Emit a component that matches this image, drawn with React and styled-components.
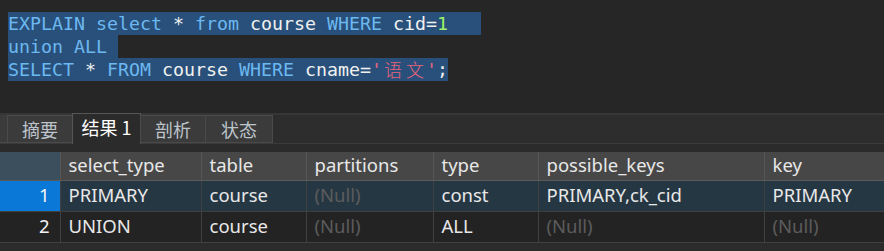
import React from "react";
import styled, { createGlobalStyle } from "styled-components";

const Global = createGlobalStyle`
  html, body { margin: 0; padding: 0; background: #262626; overflow: hidden; }
  body { width: 884px; height: 251px; }
`;

const Page = styled.div`
  width: 884px;
  height: 251px;
  display: flex;
  flex-direction: column;
  background: #262626;
  overflow: hidden;
`;

const Editor = styled.div`
  padding: 12px 0 0 8px;
  height: 113px;
  flex-shrink: 0;
  box-sizing: border-box;
  display: flex;
  flex-direction: column;
  align-items: flex-start;
  font-family: "DejaVu Sans Mono", "Liberation Mono", monospace;
  font-size: 18.27px;
  color: #f0f0f0;
`;

const Line = styled.div`
  height: 23px;
  line-height: 23px;
  white-space: pre;
  background: #29507a;
  padding-right: ${(p) => p.$tail || 0}px;
`;

const Kw = styled.span`color: #6cb8f0;`;
const Num = styled.span`color: #9ff06a;`;
const Str = styled.span`color: #e8637d;`;
const Wide = styled.span`
  display: inline-block;
  width: 22px;
  text-align: center;
  font-family: "Noto Sans CJK SC", sans-serif;
  font-size: 18px;
  font-weight: 300;
  line-height: 23px;
  vertical-align: top;
`;

const Panel = styled.div`
  flex: 1;
  background: #2b2b2b;
  display: flex;
  flex-direction: column;
`;

const TabBar = styled.div`
  height: 31px;
  flex-shrink: 0;
  display: flex;
  align-items: stretch;
  box-sizing: border-box;
  border-top: 2px solid #363636;
  border-bottom: 1px solid #3a3a3a;
  background: #2d2d2d;
  font-family: "Noto Sans CJK SC", "Noto Sans", sans-serif;
  font-size: 18px;
`;

const Tab = styled.div`
  box-sizing: border-box;
  display: flex;
  align-items: center;
  justify-content: center;
  padding: 0 ${(p) => (p.$active ? 8 : 14)}px;
  min-width: ${(p) => p.$w || 0}px;
  color: ${(p) => (p.$active ? "#ffffff" : "#bcc4cc")};
  background: ${(p) => (p.$active ? "#2b2b2b" : "#3b3b3b")};
  border: 1px solid ${(p) => (p.$active ? "#565656" : "#4a4a4a")};
  border-bottom: ${(p) => (p.$active ? "none" : "1px solid #4a4a4a")};
  margin: ${(p) => (p.$active ? "-2px 0 -1px" : "0")};
  margin-left: -1px;
  line-height: 1;
  padding-bottom: ${(p) => (p.$active ? 4 : 0)}px;
`;

const Stub = styled.div`
  width: 8px;
  box-sizing: border-box;
  background: #3b3b3b;
  border-right: 1px solid #4a4a4a;
  border-bottom: 1px solid #4a4a4a;
`;

const Grid = styled.table`
  margin-top: 8px;
  width: 1000px;
  table-layout: fixed;
  border-collapse: collapse;
  font-family: "Noto Sans", "Open Sans", sans-serif;
  font-size: 18.5px;
  color: #e8e8e8;
`;

const HeadCell = styled.th`
  height: 26px;
  padding: 0 0 2px 8px;
  text-align: left;
  font-weight: 400;
  background: ${(p) => (p.$corner ? "#3c4f5c" : "#474747")};
  border-right: 1px solid #575757;
  border-bottom: 1px solid #5a5a5a;
  white-space: nowrap;
  overflow: hidden;
  line-height: 1;
`;

const Row = styled.tr`
  background: ${(p) => (p.$selected ? "#263744" : "#232323")};
`;

const Cell = styled.td`
  height: 28px;
  padding: 0 0 2px 8px;
  border-right: 1px solid #404040;
  border-bottom: 1px solid #404040;
  white-space: nowrap;
  overflow: hidden;
  line-height: 1;
  color: ${(p) => (p.$null ? "#5c5c5c" : "#e8e8e8")};
`;

const NumCell = styled.td`
  height: 28px;
  padding: 0 10px 2px 0;
  text-align: right;
  border-right: 1px solid #404040;
  border-bottom: 1px solid #404040;
  background: ${(p) => (p.$selected ? "#0a78d6" : "#232323")};
  color: #f4f4f4;
  line-height: 1;
`;

const cols = [60, 141, 105, 127, 105, 226, 236];
const headers = ["select_type", "table", "partitions", "type", "possible_keys", "key"];
const rows = [
  ["PRIMARY", "course", null, "const", "PRIMARY,ck_cid", "PRIMARY"],
  ["UNION", "course", null, "ALL", null, null],
];

export default function App() {
  return (
    <Page>
      <Global />
      <Editor>
        <Line $tail={11}>
          <Kw>EXPLAIN</Kw> <Kw>select</Kw> * <Kw>from</Kw> course <Kw>WHERE</Kw> cid=<Num>1</Num>{"  "}
        </Line>
        <Line $tail={11}>
          <Kw>union</Kw> <Kw>ALL</Kw>
        </Line>
        <Line>
          <Kw>SELECT</Kw> * <Kw>FROM</Kw> course <Kw>WHERE</Kw> cname=<Str>'<Wide>语</Wide><Wide>文</Wide>'</Str>;
        </Line>
      </Editor>
      <Panel>
        <TabBar>
          <Stub />
          <Tab $w={66}>摘要</Tab>
          <Tab $active $w={69}>结果 1</Tab>
          <Tab $w={66}>剖析</Tab>
          <Tab $w={68}>状态</Tab>
        </TabBar>
        <Grid>
          <colgroup>
            {cols.map((w, i) => (
              <col key={i} style={{ width: w }} />
            ))}
          </colgroup>
          <thead>
            <tr>
              <HeadCell $corner />
              {headers.map((h) => (
                <HeadCell key={h}>{h}</HeadCell>
              ))}
            </tr>
          </thead>
          <tbody>
            {rows.map((r, i) => (
              <Row key={i} $selected={i === 0}>
                <NumCell $selected={i === 0}>{i + 1}</NumCell>
                {r.map((v, j) => (
                  <Cell key={j} $null={v === null}>
                    {v === null ? "(Null)" : v}
                  </Cell>
                ))}
              </Row>
            ))}
          </tbody>
        </Grid>
      </Panel>
    </Page>
  );
}
